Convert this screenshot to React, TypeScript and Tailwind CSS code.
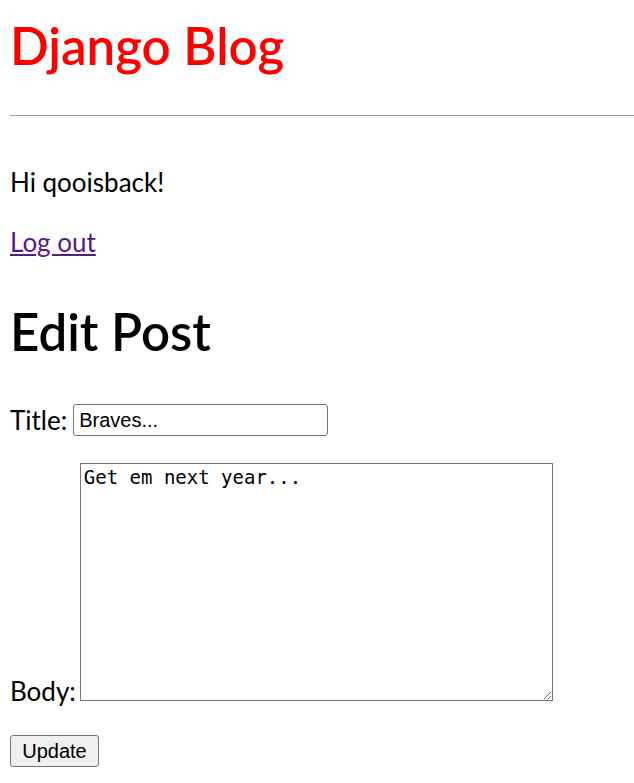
import React from "react";

export default function App() {
  return (
    <div className="min-h-[783px] w-[634px] bg-white pl-[10px] text-black" style={{ fontFamily: "Lato, 'Noto Sans', sans-serif" }}>
      <div className="flex h-[91px] items-center text-[51px] font-semibold leading-none text-[#ff0000]">Django Blog</div>
      <div className="mt-[24px] h-px w-full bg-[#a0a0a0]" />
      <div className="mt-[46px] flex h-[40px] items-center text-[26px] leading-none">Hi qooisback!</div>
      <div className="mt-[20px] flex h-[40px] items-center text-[26px] leading-none">
        <a href="#" className="text-[#551a8b] underline">Log out</a>
      </div>
      <div className="mt-[39px] flex h-[60px] items-center text-[51px] font-semibold leading-none">Edit Post</div>
      <div className="mt-[43px] flex h-[32px] items-center text-[26px] leading-none">
        <span className="mr-[6px]">Title:</span>
        <input
          type="text"
          defaultValue="Braves..."
          className="h-[32px] w-[255px] rounded-[3px] border border-[#767676] px-[5px] text-[20px] text-black"
          style={{ fontFamily: "'Liberation Sans', Arial, sans-serif" }}
        />
      </div>
      <div className="mt-[27px] flex items-end text-[26px] leading-none">
        <span className="mb-[-2px] mr-[4px] flex h-[24px] items-center">Body:</span>
        <textarea
          defaultValue="Get em next year..."
          className="h-[238px] w-[473px] resize border border-[#767676] px-[3px] py-[2px] text-[19px] leading-[22px] text-black"
          style={{ fontFamily: "'DejaVu Sans Mono', monospace" }}
        />
      </div>
      <button
        className="mt-[34px] flex h-[32px] w-[89px] items-center justify-center rounded-[3px] border border-[#767676] bg-[#efefef] text-[20px] text-black"
        style={{ fontFamily: "'Liberation Sans', Arial, sans-serif" }}
      >
        Update
      </button>
    </div>
  );
}
